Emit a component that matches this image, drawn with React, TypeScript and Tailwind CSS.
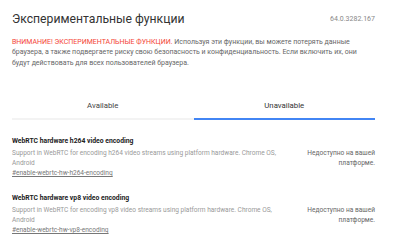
import React from "react";

type Experiment = {
    name: string;
    description: string;
    tag: string;
};

const experiments: Experiment[] = [
    {
        name: "WebRTC hardware h264 video encoding",
        description: "Support in WebRTC for encoding h264 video streams using platform hardware. Chrome OS, Android",
        tag: "#enable-webrtc-hw-h264-encoding",
    },
    {
        name: "WebRTC hardware vp8 video encoding",
        description: "Support in WebRTC for encoding vp8 video streams using platform hardware. Chrome OS, Android",
        tag: "#enable-webrtc-hw-vp8-encoding",
    },
];

const ExperimentRow: React.FC<{ item: Experiment }> = ({ item }) => (
    <div className="flex items-start">
        <div className="flex-1 pr-4">
            <div className="text-[6.8px] font-bold text-[#222] leading-[10px]">{item.name}</div>
            <div className="mt-[2px] w-[272px] text-[6.55px] leading-[10px] text-[#999]">{item.description}</div>
            <div className="text-[6.55px] leading-[10px] text-[#777] underline">{item.tag}</div>
        </div>
        <div className="w-[76px] pt-[12px] text-right text-[6.6px] leading-[10px] text-[#666]">
            Недоступно на вашей платформе.
        </div>
    </div>
);

const App: React.FC = () => {
    return (
        <div
            className="w-[400px] h-[240px] overflow-hidden bg-white pl-3 pr-[25px]"
            style={{ fontFamily: "Roboto, 'Noto Sans', sans-serif" }}
        >
            <div className="flex h-[14px] items-center justify-between mt-[12px]">
                <h1 className="text-[12.2px] leading-[14px] text-[#333]">Экспериментальные функции</h1>
                <span className="text-[7px] leading-[10px] text-[#888]">64.0.3282.167</span>
            </div>
            <p className="mt-[10.75px] whitespace-nowrap text-[7px] leading-[10.5px] text-[#666]">
                <span className="text-[#f44336]">ВНИМАНИЕ! ЭКСПЕРИМЕНТАЛЬНЫЕ ФУНКЦИИ.</span> Используя эти
                функции, вы можете потерять данные
                <br />
                браузера, а также подвергаете риску свою безопасность и конфиденциальность. Если включить их, они
                <br />
                будут действовать для всех пользователей браузера.
            </p>
            <div className="mt-[31.75px] flex">
                <div className="flex-1 flex flex-col items-center">
                    <span className="text-[7.8px] leading-[12px] text-[#444]">Available</span>
                    <div className="mt-[6px] h-[2px] w-full bg-[#f3f3f3]" />
                </div>
                <div className="flex-1 flex flex-col items-center">
                    <span className="text-[7.8px] leading-[12px] text-[#333]">Unavailable</span>
                    <div className="mt-[6px] h-[2px] w-full bg-[#4285f4]" />
                </div>
            </div>
            <div className="mt-[16px] flex flex-col gap-[15px]">
                {experiments.map((item, key) => (
                    <ExperimentRow key={key} item={item} />
                ))}
            </div>
        </div>
    );
};

export default App;
